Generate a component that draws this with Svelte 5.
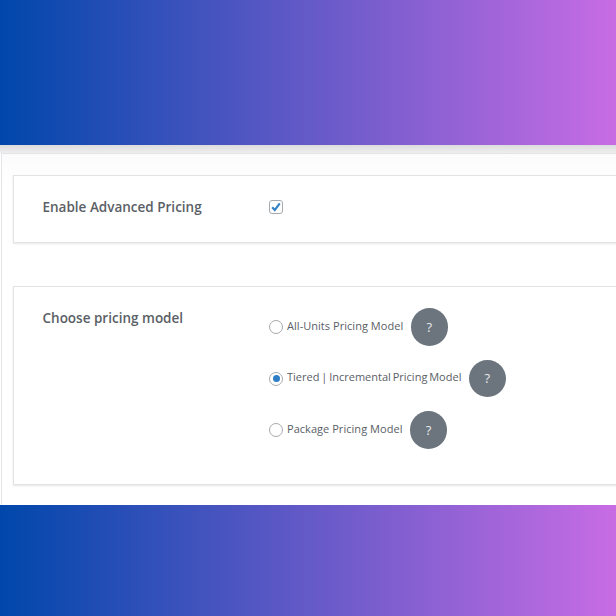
<script>
  const models = [
    { label: 'All-Units Pricing Model', checked: false, tight: false },
    { label: 'Tiered | Incremental Pricing Model', checked: true, tight: true },
    { label: 'Package Pricing Model', checked: false, tight: false }
  ];
</script>

<div class="page">
  <div class="band top"></div>
  <div class="gutter">
    <main class="panel">
      <section class="card first">
        <h2>Enable Advanced Pricing</h2>
        <span class="check">
          <svg viewBox="0 0 12 12" width="12" height="12" aria-hidden="true">
            <path d="M2.2 6.2 L4.8 9 L9.8 2.4" fill="none" stroke="#3582c4" stroke-width="2.1" />
          </svg>
        </span>
      </section>
      <section class="card second">
        <h2>Choose pricing model</h2>
        <div class="options">
          {#each models as m}
            <div class="option">
              <span class="radio" class:on={m.checked}></span>
              <span class="label" class:tight={m.tight}>{m.label}</span>
              <span class="help">?</span>
            </div>
          {/each}
        </div>
      </section>
    </main>
  </div>
  <div class="band bottom"></div>
</div>

<style>
  :global(body) {
    margin: 0;
    background: #fff;
  }
  .page {
    width: 616px;
    height: 616px;
    overflow: hidden;
    display: flex;
    flex-direction: column;
    font-family: "Open Sans", "Noto Sans", sans-serif;
    color: #5a6066;
  }
  .band {
    background: linear-gradient(90deg, #0047ab 0%, #c86ce4 100%);
    flex: none;
  }
  .top {
    height: 145px;
  }
  .bottom {
    height: 111px;
  }
  .gutter {
    height: 360px;
    flex: none;
    background: linear-gradient(180deg, #dcdcde 0, #eeeeef 8px, #fff 8px);
    padding: 8px 0 0 1px;
    box-sizing: border-box;
  }
  .panel {
    height: 352px;
    box-sizing: border-box;
    border-top: 1px solid #e2e4e7;
    border-left: 1px solid #e2e4e7;
    background: linear-gradient(180deg, #fbfbfb, #fff 30px);
    padding: 21px 0 0 11px;
    display: flex;
    flex-direction: column;
    gap: 43px;
  }
  .card {
    box-sizing: border-box;
    width: 620px;
    background: #fff;
    border: 1px solid #e1e3e6;
    box-shadow: 0 1px 2px rgba(0, 0, 0, 0.1);
    display: flex;
    padding-left: 28.5px;
  }
  .first {
    height: 68px;
    padding-top: 21px;
  }
  .second {
    height: 199px;
    padding-top: 21px;
  }
  h2 {
    margin: 0;
    width: 226.5px;
    flex: none;
    font-size: 13.5px;
    line-height: 20px;
    font-weight: 600;
    color: #5a6066;
  }
  .check {
    width: 14px;
    height: 14px;
    box-sizing: border-box;
    margin-top: 3px;
    border: 1px solid #a7aaad;
    border-radius: 3px;
    display: block;
    background: #fff;
  }
  .check svg {
    display: block;
  }
  .options {
    display: flex;
    flex-direction: column;
    gap: 14px;
  }
  .option {
    display: flex;
    align-items: center;
    height: 37.5px;
  }
  .radio {
    width: 14px;
    height: 14px;
    box-sizing: border-box;
    flex: none;
    border: 1px solid #a7aaad;
    border-radius: 50%;
    background: #fff;
    position: relative;
    top: 0.5px;
    margin-right: 4px;
  }
  .radio.on::after {
    content: "";
    position: absolute;
    left: 2.5px;
    top: 2.5px;
    width: 7px;
    height: 7px;
    border-radius: 50%;
    background: #2f7dc4;
  }
  .label {
    font-size: 11px;
    line-height: 16px;
    letter-spacing: 0.04px;
    position: relative;
    top: -1px;
    color: #5a6066;
  }
  .tight {
    letter-spacing: 0;
    word-spacing: -1px;
  }
  .help {
    width: 37px;
    height: 37.5px;
    flex: none;
    margin-left: 7.5px;
    border-radius: 50%;
    background: #6c757d;
    color: #e8eaec;
    font-size: 13px;
    display: flex;
    align-items: center;
    justify-content: center;
  }
</style>
